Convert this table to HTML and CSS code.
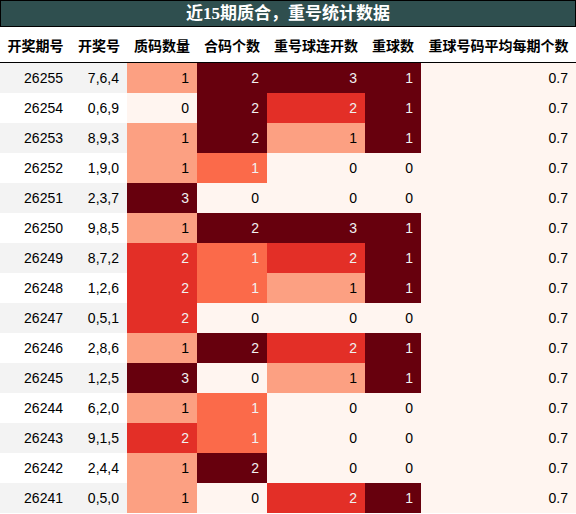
FILE: index.html
```html
<!DOCTYPE html>
<html>
<head>
    <meta charset="utf-8">
    <title>近15期质合，重号统计数据</title>
    <link rel="stylesheet" href="styles.css">
</head>
<body>
    <div class="title">近15期质合，重号统计数据</div>
    <table class="stats">
        <colgroup>
            <col class="c-issue">
            <col class="c-draw">
            <col class="c-prime">
            <col class="c-comp">
            <col class="c-run">
            <col class="c-rep">
            <col class="c-avg">
        </colgroup>
        <thead>
            <tr>
                <th>开奖期号</th>
                <th>开奖号</th>
                <th>质码数量</th>
                <th>合码个数</th>
                <th>重号球连开数</th>
                <th>重球数</th>
                <th>重球号码平均每期个数</th>
            </tr>
        </thead>
        <tbody>
            <tr><td class="idx">26255</td><td class="idx">7,6,4</td><td class="r1">1</td><td class="r4">2</td><td class="r4">3</td><td class="r4">1</td><td class="r0">0.7</td></tr>
            <tr><td class="idx">26254</td><td class="idx">0,6,9</td><td class="r0">0</td><td class="r4">2</td><td class="r3">2</td><td class="r4">1</td><td class="r0">0.7</td></tr>
            <tr><td class="idx">26253</td><td class="idx">8,9,3</td><td class="r1">1</td><td class="r4">2</td><td class="r1">1</td><td class="r4">1</td><td class="r0">0.7</td></tr>
            <tr><td class="idx">26252</td><td class="idx">1,9,0</td><td class="r1">1</td><td class="r2">1</td><td class="r0">0</td><td class="r0">0</td><td class="r0">0.7</td></tr>
            <tr><td class="idx">26251</td><td class="idx">2,3,7</td><td class="r4">3</td><td class="r0">0</td><td class="r0">0</td><td class="r0">0</td><td class="r0">0.7</td></tr>
            <tr><td class="idx">26250</td><td class="idx">9,8,5</td><td class="r1">1</td><td class="r4">2</td><td class="r4">3</td><td class="r4">1</td><td class="r0">0.7</td></tr>
            <tr><td class="idx">26249</td><td class="idx">8,7,2</td><td class="r3">2</td><td class="r2">1</td><td class="r3">2</td><td class="r4">1</td><td class="r0">0.7</td></tr>
            <tr><td class="idx">26248</td><td class="idx">1,2,6</td><td class="r3">2</td><td class="r2">1</td><td class="r1">1</td><td class="r4">1</td><td class="r0">0.7</td></tr>
            <tr><td class="idx">26247</td><td class="idx">0,5,1</td><td class="r3">2</td><td class="r0">0</td><td class="r0">0</td><td class="r0">0</td><td class="r0">0.7</td></tr>
            <tr><td class="idx">26246</td><td class="idx">2,8,6</td><td class="r1">1</td><td class="r4">2</td><td class="r3">2</td><td class="r4">1</td><td class="r0">0.7</td></tr>
            <tr><td class="idx">26245</td><td class="idx">1,2,5</td><td class="r4">3</td><td class="r0">0</td><td class="r1">1</td><td class="r4">1</td><td class="r0">0.7</td></tr>
            <tr><td class="idx">26244</td><td class="idx">6,2,0</td><td class="r1">1</td><td class="r2">1</td><td class="r0">0</td><td class="r0">0</td><td class="r0">0.7</td></tr>
            <tr><td class="idx">26243</td><td class="idx">9,1,5</td><td class="r3">2</td><td class="r2">1</td><td class="r0">0</td><td class="r0">0</td><td class="r0">0.7</td></tr>
            <tr><td class="idx">26242</td><td class="idx">2,4,4</td><td class="r1">1</td><td class="r4">2</td><td class="r0">0</td><td class="r0">0</td><td class="r0">0.7</td></tr>
            <tr><td class="idx">26241</td><td class="idx">0,5,0</td><td class="r1">1</td><td class="r0">0</td><td class="r3">2</td><td class="r4">1</td><td class="r0">0.7</td></tr>
        </tbody>
    </table>
</body>
</html>
```

FILE: styles.css
```css
body {
    margin: 0;
    background-color: #fff;
    font-family: "Liberation Sans", "Noto Sans CJK SC", sans-serif;
    color: #000;
}

.title {
    height: 25px;
    line-height: 25px;
    border: 1px solid #000;
    background-color: #2f4f4f;
    color: #fff;
    font-family: "Liberation Serif", "Noto Sans CJK SC", serif;
    font-size: 17px;
    font-weight: bold;
    text-align: center;
}

.stats {
    width: 576px;
    border-collapse: collapse;
    table-layout: fixed;
    font-size: 14px;
}

.c-issue { width: 71px; }
.c-draw { width: 56px; }
.c-prime { width: 70px; }
.c-comp { width: 70px; }
.c-run { width: 98px; }
.c-rep { width: 56px; }
.c-avg { width: 155px; }

.stats th {
    height: 35px;
    padding: 0 7px;
    font-size: 14px;
    font-weight: bold;
    text-align: center;
    white-space: nowrap;
    border-bottom: 1px solid #000;
}

.stats td {
    height: 30px;
    padding: 0 8px;
    text-align: right;
    white-space: nowrap;
}

.stats tbody tr:nth-child(odd) .idx {
    background-color: #f3f3f3;
}

.r0 { background-color: #fff5f0; color: #000; }
.r1 { background-color: #fca082; color: #000; }
.r2 { background-color: #fb6a4a; color: #f1f1f1; }
.r3 { background-color: #e32f27; color: #f1f1f1; }
.r4 { background-color: #67000d; color: #f1f1f1; }
```
